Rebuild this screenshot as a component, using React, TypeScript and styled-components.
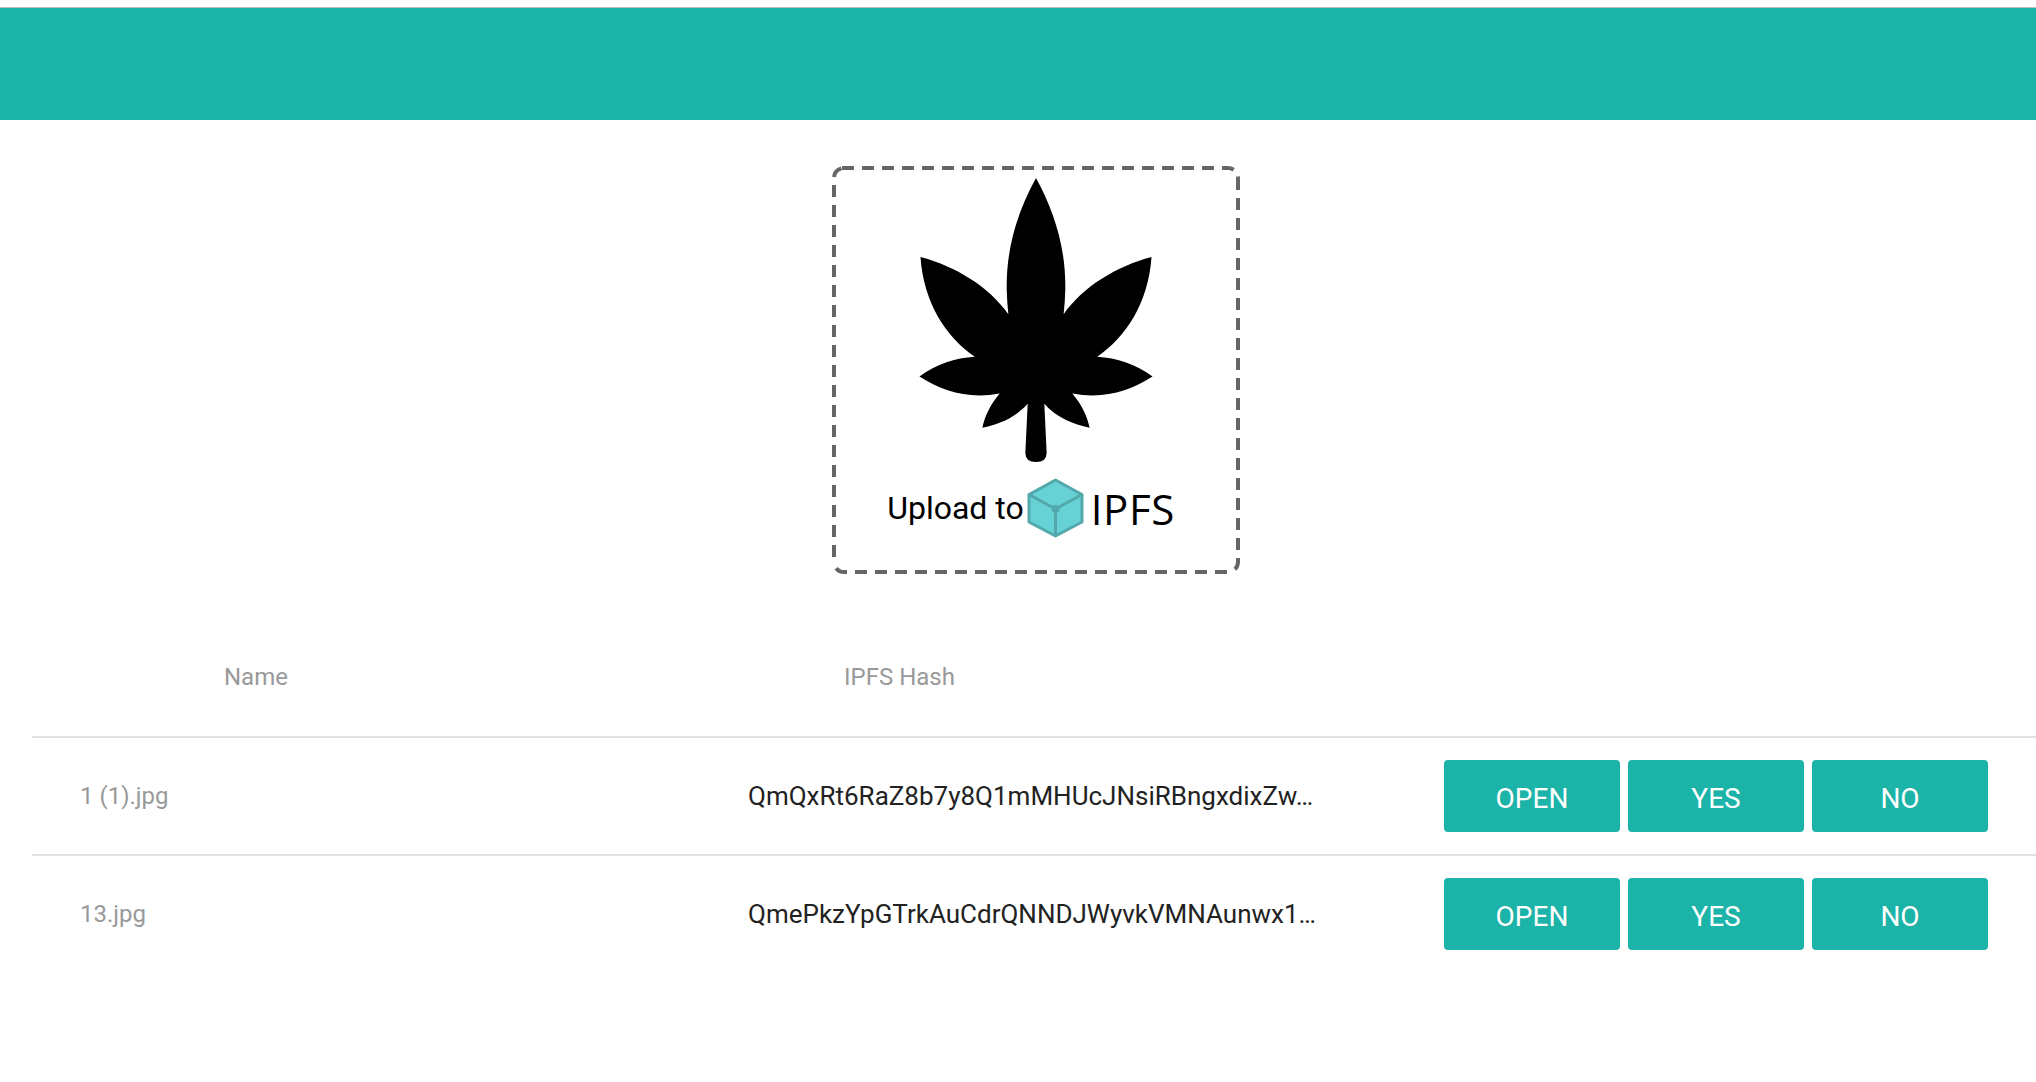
import React from 'react';
import styled, { createGlobalStyle } from 'styled-components';

const TEAL = '#1cb3a8';

const GlobalStyle = createGlobalStyle`
    html, body {
        margin: 0;
        background: #fff;
        font-family: Roboto, "Liberation Sans", sans-serif;
        overflow: hidden;
    }
`;

const Page = styled.div`
    width: 2036px;
    height: 1082px;
    padding-top: 7px;
    box-sizing: border-box;
`;

const TopBar = styled.header`
    height: 112px;
    background: ${TEAL};
    border-top: 1px solid #bcbcbc;
`;

const UploadArea = styled.section`
    display: flex;
    justify-content: center;
    padding: 46px 0 0 36px;
`;

const DropZone = styled.div`
    position: relative;
    width: 408px;
    height: 408px;
    box-sizing: border-box;
    padding-top: 12px;
    display: flex;
    flex-direction: column;
    align-items: center;
`;

const DashOutline = styled.svg`
    position: absolute;
    top: 0;
    left: 0;
    width: 408px;
    height: 408px;
`;

const Leaf = styled.svg`
    width: 234px;
    height: 284px;
    display: block;
`;

const UploadLabel = styled.div`
    display: flex;
    align-items: center;
    margin-top: 16px;
    height: 60px;
    margin-left: -10px;
    font-size: 32px;
    color: #000;
`;

const Cube = styled.svg`
    width: 57px;
    height: 60px;
    margin: 0 7px 0 3px;
`;

const IpfsWord = styled.span`
    font-family: "Open Sans", sans-serif;
    font-weight: 400;
    font-size: 42px;
    letter-spacing: 0.6px;
`;

const Table = styled.section`
    margin: 43px 0 0 32px;
`;

const HeadRow = styled.div`
    display: flex;
    height: 119px;
    align-items: center;
    font-size: 24px;
    color: #999;
`;

const HeadCell = styled.div<{ $width: number; $left: number }>`
    width: ${(props) => props.$width}px;
    padding-left: ${(props) => props.$left}px;
    box-sizing: border-box;
`;

const Row = styled.div`
    display: flex;
    height: 118px;
    align-items: center;
    border-top: 2px solid #e0e0e0;
    box-sizing: border-box;
`;

const FileName = styled.div`
    width: 716px;
    padding-left: 48px;
    box-sizing: border-box;
    font-size: 24px;
    color: #999;
`;

const Hash = styled.div`
    width: 696px;
    font-size: 26px;
    color: #222;
    padding-bottom: 1px;
`;

const Actions = styled.div`
    display: flex;
    gap: 8px;
`;

const ActionButton = styled.button`
    width: 176px;
    height: 72px;
    border: none;
    border-radius: 4px;
    background: ${TEAL};
    color: #fff;
    font-family: inherit;
    font-size: 28px;
    padding: 5px 0 0;
`;

const files = [
    { name: '1 (1).jpg', hash: 'QmQxRt6RaZ8b7y8Q1mMHUcJNsiRBngxdixZw…' },
    { name: '13.jpg', hash: 'QmePkzYpGTrkAuCdrQNNDJWyvkVMNAunwx1…' },
];

const App = () => {
    return (
        <Page>
            <GlobalStyle />
            <TopBar />
            <UploadArea>
                <DropZone>
                    {/* each side restarts the dash pattern, css dashes come out too short */}
                    <DashOutline viewBox="0 0 408 408">
                        <path
                            fill="none"
                            stroke="#666"
                            strokeWidth="4"
                            strokeDasharray="12 8"
                            d="M10 2H396A10 10 0 0 1 406 12M406 12V396A10 10 0 0 1 396 406M395 406H12A10 10 0 0 1 2 396M2 391V12A10 10 0 0 1 12 2"
                        />
                    </DashOutline>
                    <Leaf viewBox="298 55 700 853">
                        <path
                            fill="#000"
                            d="M648 55C700 150 738 260 736 390Q735 430 731 464C790 380 890 320 995 292C985 430 920 530 832 592C890 595 950 615 998 651C930 695 850 720 757 702C785 735 802 770 809 805C760 795 710 775 673 733L680 880Q680 908 648 908Q616 908 616 880L623 733C586 775 536 795 487 805C494 770 511 735 539 702C446 720 366 695 298 651C346 615 406 595 464 592C376 530 311 430 301 292C406 320 506 380 565 464Q561 430 560 390C558 260 596 150 648 55Z"
                        />
                    </Leaf>
                    <UploadLabel>
                        Upload to
                        <Cube viewBox="0 0 57 60">
                            <path
                                d="M28.5 2L55 16.500V44L28.500 58L2 44V16.500Z"
                                fill="#66d2d6"
                                stroke="#52a8aa"
                                strokeWidth="3"
                                strokeLinejoin="round"
                            />
                            <path
                                d="M2 16.500L28.500 31L55 16.500M28.500 31V58"
                                fill="none"
                                stroke="#52a8aa"
                                strokeWidth="3"
                            />
                            <circle cx="28.500" cy="31" r="4" fill="#52a8aa" />
                        </Cube>
                        <IpfsWord>IPFS</IpfsWord>
                    </UploadLabel>
                </DropZone>
            </UploadArea>
            <Table>
                <HeadRow>
                    <HeadCell $width={812} $left={192}>
                        Name
                    </HeadCell>
                    <HeadCell $width={400} $left={0}>
                        IPFS Hash
                    </HeadCell>
                </HeadRow>
                {files.map((file) => (
                    <Row key={file.name}>
                        <FileName>{file.name}</FileName>
                        <Hash>{file.hash}</Hash>
                        <Actions>
                            <ActionButton>OPEN</ActionButton>
                            <ActionButton>YES</ActionButton>
                            <ActionButton>NO</ActionButton>
                        </Actions>
                    </Row>
                ))}
            </Table>
        </Page>
    );
};

export default App;
